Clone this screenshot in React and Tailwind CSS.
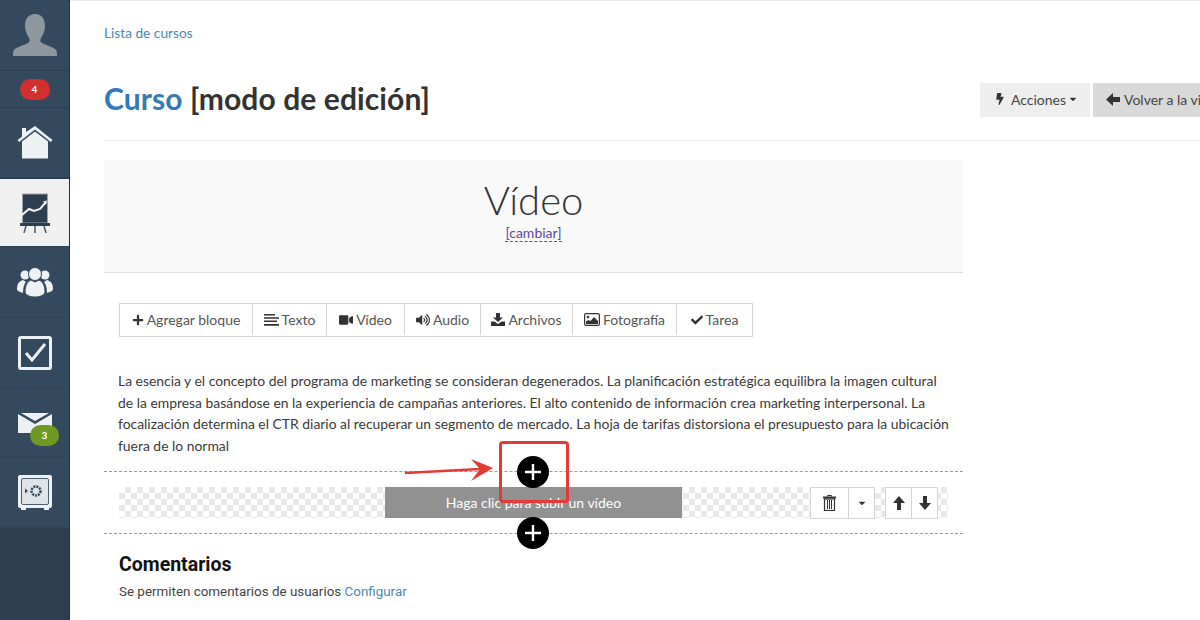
import React from "react";
import { FaPlus, FaVideo, FaVolumeUp, FaCheck, FaBolt, FaCaretDown } from "react-icons/fa";

const AvatarIcon = () => (
  <svg width="46" height="44" viewBox="0 0 46 44" fill="#8e969e">
    <path d="M23 1c7 0 10 5 10 12 0 5-2 9-4 12-1 2-1 4 1 5 5 3 15 4 15 10v3H1v-3c0-6 10-7 15-10 2-1 2-3 1-5-2-3-4-7-4-12C13 6 16 1 23 1z" />
  </svg>
);

const HomeIcon = () => (
  <svg width="36" height="34" viewBox="0 0 36 34" fill="#eef1f3">
    <path d="M5 2h4v4L18 0l17.500 14-1.600 2L18 3.400 2.100 16 .5 14 5 10.400z" />
    <path d="M5 15.500 18 5.500l13 10V32.500H5z" />
  </svg>
);

const ChartIcon = () => (
  <svg width="30" height="40" viewBox="0 0 30 40">
    <rect x="2.500" y="1" width="25" height="29" fill="#2c3e50" stroke="#9aa3ac" strokeWidth="1" />
    <path d="M2 22l7-6 5 2 6-2 6-7" fill="none" stroke="#f3f4f5" strokeWidth="2" />
    <path d="M27 7.500l-4 1 3 3z" fill="#f3f4f5" />
    <rect x="0" y="30" width="30" height="3" fill="#2c3e50" />
    <path d="M6 33l-2 7M15 33v7M24 33l2 7" stroke="#4a5866" strokeWidth="1.500" />
  </svg>
);

const UsersIcon = () => (
  <svg width="36" height="30" viewBox="0 0 36 30" fill="#eef1f3">
    <circle cx="8" cy="8" r="4.500" />
    <circle cx="28" cy="8" r="4.500" />
    <path d="M0 22c0-5 2-8 6-9l3 2c-2 2-3 6-3 11-3-1-6-2-6-4zM36 22c0-5-2-8-6-9l-3 2c2 2 3 6 3 11 3-1 6-2 6-4z" />
    <circle cx="18" cy="7" r="6.500" stroke="#34495e" strokeWidth="1" />
    <path d="M8 25c0-7 3-11 6-12l4 2 4-2c3 1 6 5 6 12 0 3-5 5-10 5S8 28 8 25z" stroke="#34495e" strokeWidth="1" />
  </svg>
);

const CheckBoxIcon = () => (
  <svg width="34" height="34" viewBox="0 0 34 34">
    <rect x="1.500" y="1.500" width="31" height="31" rx="1.500" fill="none" stroke="#eef1f3" strokeWidth="3" />
    <path d="M8 17l6 7L27 8" fill="none" stroke="#eef1f3" strokeWidth="3" />
  </svg>
);

const MailIcon = () => (
  <svg width="34" height="20" viewBox="0 0 34 20" fill="#eef1f3">
    <path d="M0 1l17 10L34 1v19H0z" />
    <path d="M3 0h28L17 8z" />
  </svg>
);

const SafeIcon = () => (
  <svg width="34" height="35" viewBox="0 0 34 35">
    <rect x="0" y="0" width="34" height="33" rx="2" fill="#eef1f3" />
    <rect x="3.500" y="3.500" width="27" height="26" rx="1.500" fill="#dfe4e8" stroke="#4c5e70" strokeWidth="1" />
    <circle cx="18" cy="16" r="4.500" fill="none" stroke="#34495e" strokeWidth="2.500" strokeDasharray="2 1" />
    <path d="M7 13.500l3 2.500-3 2.500z" fill="#34495e" />
    <path d="M3 33h5v2H3zM26 33h5v2h-5z" fill="#eef1f3" />
  </svg>
);

const LinesIcon = () => (
  <svg width="15" height="12" viewBox="0 0 15 12" fill="#333">
    <path d="M0 0h11v1.500H0zM0 3.300h15v1.500H0zM0 6.600h13v1.500H0zM0 9.900h15v1.800H0z" />
  </svg>
);

const DownloadIcon = () => (
  <svg width="14" height="13" viewBox="0 0 14 13" fill="#333">
    <path d="M5 0h4v4.500h3L7 9 2 4.500h3z" />
    <path d="M0 8.500h3.500L7 11l3.500-2.500H14V13H0z" />
  </svg>
);

const PictureIcon = () => (
  <svg width="16" height="13" viewBox="0 0 16 13">
    <rect x="0.600" y="0.600" width="14.800" height="11.800" rx="1.500" fill="#fff" stroke="#333" strokeWidth="1.200" />
    <circle cx="4" cy="4" r="1.300" fill="#333" />
    <path d="M2 11V8.500l2.500-1.500 2 1L10 4l4 4v3z" fill="#333" />
  </svg>
);

const TrashIcon = () => (
  <svg width="13" height="16" viewBox="0 0 13 16">
    <path d="M4.500 1.500V.5h4v1" fill="none" stroke="#333" />
    <rect x="0" y="1.500" width="13" height="2" fill="#333" />
    <rect x="1.500" y="4" width="10" height="11.500" fill="none" stroke="#333" strokeWidth="1.200" />
    <path d="M4.500 5v9M6.500 5v9M8.500 5v9" stroke="#333" />
  </svg>
);

const ArrowUp = () => (
  <svg width="14" height="14" viewBox="0 0 14 14" fill="#333">
    <path d="M7 0l6 7H9v7H5V7H1z" />
  </svg>
);

const ArrowDown = () => (
  <svg width="14" height="14" viewBox="0 0 14 14" fill="#333">
    <path d="M7 14L1 7h4V0h4v7h4z" />
  </svg>
);

const ArrowLeft = () => (
  <svg width="14" height="13" viewBox="0 0 14 13" fill="#333">
    <path d="M0 6.500L7 0v4h7v5H7v4z" />
  </svg>
);

const navItems = [
  { icon: <HomeIcon />, h: "h-[70px]" },
  { icon: <ChartIcon />, h: "h-[69px]", active: true },
  { icon: <UsersIcon />, h: "h-[71px]" },
  { icon: <CheckBoxIcon />, h: "h-[70px]" },
  { icon: <MailIcon />, h: "h-[70px]", badge: "3" },
  { icon: <SafeIcon />, h: "h-[70px]" },
];

const tools = [
  { label: "Agregar bloque", icon: <FaPlus size={12} color="#333" />, w: "w-[132px]" },
  { label: "Texto", icon: <LinesIcon />, w: "w-[74px]" },
  { label: "Vídeo", icon: <FaVideo size={14} color="#333" />, w: "w-[78px]" },
  { label: "Audio", icon: <FaVolumeUp size={14} color="#333" />, w: "w-[76px]" },
  { label: "Archivos", icon: <DownloadIcon />, w: "w-[92px]" },
  { label: "Fotografía", icon: <PictureIcon />, w: "w-[104px]" },
  { label: "Tarea", icon: <FaCheck size={12} color="#333" />, w: "w-[76px]" },
];

const Sidebar = () => (
  <aside className="w-[70px] shrink-0 bg-[#2c3e50] border-r border-[#22313f] h-[620px]">
    <div className="h-[71px] bg-[#34495e] border-b border-[#2c3e50] flex items-center justify-center">
      <AvatarIcon />
    </div>
    <div className="h-[37px] bg-[#34495e] border-b border-[#2c3e50] flex items-center justify-center">
      <span className="w-[30px] h-[21px] rounded-full bg-[#d32f2f] text-white text-[10px] font-bold flex items-center justify-center">
        4
      </span>
    </div>
    {navItems.map((item, i) => (
      <div
        key={i}
        className={`${item.h} flex items-center justify-center relative ${
          item.active ? "bg-[#f0f0f0] border-y border-[#2c3e50]" : "bg-[#34495e] border-b border-[#2f4356]"
        }`}
      >
        {item.icon}
        {item.badge && (
          <span className="absolute left-[30px] top-[37px] w-[29px] h-[21px] rounded-full bg-[#6f9a22] text-white text-[10px] font-bold flex items-center justify-center">
            {item.badge}
          </span>
        )}
      </div>
    ))}
  </aside>
);

const PlusCircle = ({ className }) => (
  <div className={`absolute w-8 h-8 rounded-full bg-black flex items-center justify-center ${className}`}>
    <svg width="16" height="16" viewBox="0 0 16 16" fill="#fff">
      <path d="M6.800 0h2.400v6.800H16v2.400H9.200V16H6.800V9.200H0V6.800h6.800z" />
    </svg>
  </div>
);

export default function App() {
  return (
    <div
      className="w-[1200px] h-[620px] overflow-hidden flex bg-white text-[#333]"
      style={{ fontFamily: "Lato, 'Liberation Sans', sans-serif" }}
    >
      <Sidebar />
      <main className="flex-1 min-w-0 border-t border-[#e8e8e8] pl-[34px]">
        <a className="block mt-[24px] h-[16px] leading-[16px] text-[13.700px] text-[#4a87b8]">Lista de cursos</a>

        <div className="flex items-center mt-[35px] h-[48px] w-[1160px]">
          <h1 className="w-[876px] shrink-0 pb-[4px] text-[30px] tracking-[0.100px] font-bold">
            <span className="text-[#337ab7]">Curso</span> [modo de edición]
          </h1>
          <div className="flex gap-[3px] text-[14px] text-[#444] shrink-0">
            <button className="w-[110px] h-[34px] pb-[2px] pl-[2px] bg-[#eeeeee] flex items-center justify-center gap-[5px]">
              <FaBolt size={12} color="#333" />
              <span>Acciones</span>
              <FaCaretDown size={10} color="#333" className="-ml-[3px]" />
            </button>
            <button className="w-[130px] h-[34px] pb-[2px] bg-[#d9d9d9] flex items-center pl-[13px] gap-[4px] whitespace-nowrap">
              <ArrowLeft />
              <span>Volver a la vi</span>
            </button>
          </div>
        </div>

        <div className="mt-[16px] border-t border-[#eeeeee] w-[1096px]" />

        <section className="w-[859px] mt-[19px] relative">
          <div className="h-[113px] bg-[#f9f9f9] border-b border-[#dddddd] flex flex-col items-center">
            <div className="mt-[17px] h-[46px] leading-[46px] text-[40px] font-light text-[#333]">Vídeo</div>
            <a className="mt-[1px] text-[14px] leading-[17px] text-[#5b4a9e] border-b border-dashed border-[#5b4a9e]">[cambiar]</a>
          </div>

          <div className="flex mt-[30px] ml-[15px] w-fit h-[34px] pb-[1px] border border-[#d5d5d5] text-[14px] text-[#555]">
            {tools.map((t, i) => (
              <div
                key={t.label}
                className={`${t.w} flex items-center justify-center gap-[3px] ${i > 0 ? "border-l border-[#d5d5d5]" : ""}`}
              >
                {t.icon}
                <span>{t.label}</span>
              </div>
            ))}
          </div>

          <p className="mt-[33px] ml-[14px] w-[834px] text-[13.900px] leading-[21.600px] text-[#3a3a3a]">
            La esencia y el concepto del programa de marketing se consideran degenerados. La planificación estratégica
            equilibra la imagen cultural de la empresa basándose en la experiencia de campañas anteriores. El alto
            contenido de información crea marketing interpersonal. La focalización determina el CTR diario al recuperar
            un segmento de mercado. La hoja de tarifas distorsiona el presupuesto para la ubicación fuera de lo normal
          </p>

          <div className="mt-[15px] h-[63px] border-y border-dashed border-[#9a9a9a] relative">
            <div className="mt-[15px] ml-[15px] w-[829px] h-[31px] relative bg-[repeating-conic-gradient(#e8e8e8_0_25%,#ffffff_0_50%)] bg-[length:12px_12px] flex items-center">
              <div className="ml-[266px] w-[297px] h-[31px] bg-[#919191] text-white text-[14px] flex items-center justify-center">
                Haga clic para subir un vídeo
              </div>
              <div className="ml-[128px] flex h-[32px] bg-white border border-[#d5d5d5]">
                <span className="w-[38px] flex items-center justify-center border-r border-[#d5d5d5]">
                  <TrashIcon />
                </span>
                <span className="w-[25px] flex items-center justify-center">
                  <FaCaretDown size={10} color="#333" />
                </span>
              </div>
              <div className="ml-[10px] flex h-[32px] bg-white border border-[#d5d5d5]">
                <span className="w-[26px] flex items-center justify-center border-r border-[#d5d5d5]">
                  <ArrowUp />
                </span>
                <span className="w-[25px] flex items-center justify-center">
                  <ArrowDown />
                </span>
              </div>
            </div>
            <PlusCircle className="left-[413px] top-[-16px]" />
            <PlusCircle className="left-[413px] top-[45px]" />
          </div>

          <h2 className="mt-[19px] ml-[15px] text-[19.500px] leading-[24px] font-bold text-[#111] font-['Roboto']">Comentarios</h2>
          <p className="mt-[6px] ml-[15px] text-[13.400px] leading-[18px] text-[#444] font-['Roboto']">
            Se permiten comentarios de usuarios <a className="text-[#4a87b8]">Configurar</a>
          </p>

          {/* red marks painted over the screenshot */}
          <div className="absolute left-[395px] top-[281px] w-[70px] h-[62px] rounded-[4px] border-[3px] border-[#e53935]" />
          <svg className="absolute left-[300px] top-[298px]" width="92" height="24" viewBox="0 0 92 24">
            <path d="M1 15l75-4" stroke="#e53935" strokeWidth="2.500" />
            <path d="M67 1l22 9-22 13 9-12z" fill="#e53935" />
          </svg>
        </section>
      </main>
    </div>
  );
}
